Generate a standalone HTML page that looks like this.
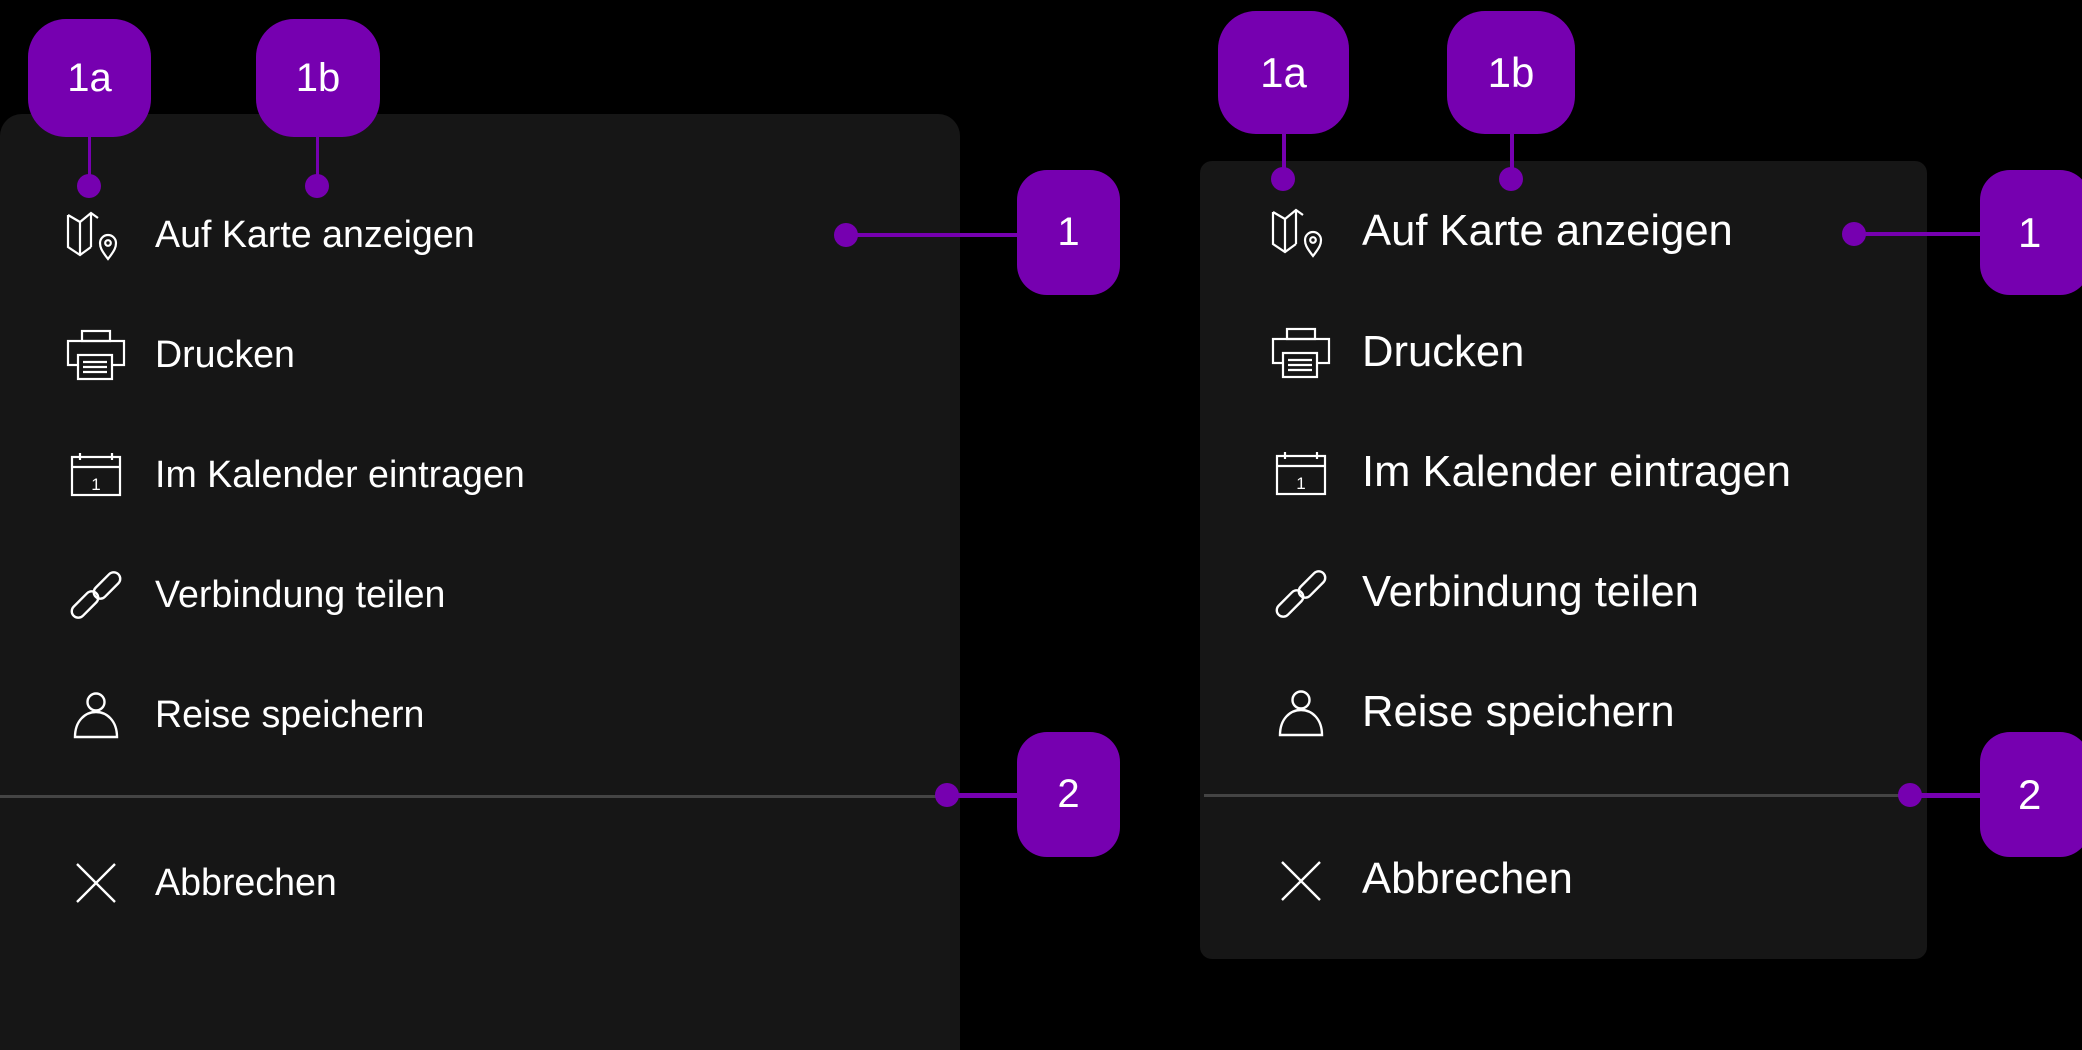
<!DOCTYPE html>
<html><head><meta charset="utf-8"><style>
*{margin:0;padding:0;box-sizing:border-box}
html,body{width:2082px;height:1050px;overflow:hidden}
body{background:#000;position:relative;font-family:"Liberation Sans",sans-serif;color:#fff}
.panel{position:absolute;background:#161616}
.badge{position:absolute;background:#7600b0;color:#fff;display:flex;align-items:center;justify-content:center;border-radius:38px}
.line{position:absolute;background:#7600b0}
.dot{position:absolute;width:24px;height:24px;border-radius:50%;background:#7600b0}
.item{position:absolute;white-space:nowrap;line-height:1}
.ic{position:absolute}
.div{position:absolute;height:3px;background:#444}
</style></head><body>

<div class="panel" style="left:0;top:114px;width:960px;height:936px;border-radius:22px 22px 0 0"></div>
<div class="div" style="left:0;top:795px;width:960px"></div>

<div class="line" style="left:88px;top:130px;width:3px;height:56px"></div>
<div class="line" style="left:316px;top:130px;width:3px;height:56px"></div>
<div class="dot" style="left:77px;top:174px"></div>
<div class="dot" style="left:305px;top:174px"></div>
<div class="badge" style="left:28px;top:19px;width:123px;height:118px;font-size:40px">1a</div>
<div class="badge" style="left:256px;top:19px;width:124px;height:118px;font-size:40px">1b</div>

<div class="line" style="left:846px;top:233px;width:180px;height:4px"></div>
<div class="dot" style="left:834px;top:223px"></div>
<div class="badge" style="left:1017px;top:170px;width:103px;height:125px;font-size:40px;border-radius:30px">1</div>
<div class="line" style="left:947px;top:793px;width:80px;height:5px"></div>
<div class="dot" style="left:935px;top:783px"></div>
<div class="badge" style="left:1017px;top:732px;width:103px;height:125px;font-size:40px;border-radius:30px">2</div>

<div class="panel" style="left:1200px;top:161px;width:727px;height:798px;border-radius:12px"></div>
<div class="div" style="left:1204px;top:794px;width:723px"></div>

<div class="line" style="left:1282px;top:125px;width:4px;height:54px"></div>
<div class="line" style="left:1510px;top:125px;width:4px;height:54px"></div>
<div class="dot" style="left:1271px;top:167px"></div>
<div class="dot" style="left:1499px;top:167px"></div>
<div class="badge" style="left:1218px;top:11px;width:131px;height:123px;font-size:42px">1a</div>
<div class="badge" style="left:1447px;top:11px;width:128px;height:123px;font-size:42px">1b</div>

<div class="line" style="left:1854px;top:232px;width:130px;height:4px"></div>
<div class="dot" style="left:1842px;top:222px"></div>
<div class="badge" style="left:1980px;top:170px;width:110px;height:125px;font-size:42px;border-radius:30px;justify-content:flex-start;padding-left:38px">1</div>
<div class="line" style="left:1910px;top:793px;width:74px;height:5px"></div>
<div class="dot" style="left:1898px;top:783px"></div>
<div class="badge" style="left:1980px;top:732px;width:110px;height:125px;font-size:42px;border-radius:30px;justify-content:flex-start;padding-left:38px">2</div>

<div class="item" style="left:155px;top:216px;font-size:37.6px">Auf Karte anzeigen</div>
<div class="item" style="left:155px;top:336px;font-size:37.6px">Drucken</div>
<div class="item" style="left:155px;top:456px;font-size:37.6px">Im Kalender eintragen</div>
<div class="item" style="left:155px;top:576px;font-size:37.6px">Verbindung teilen</div>
<div class="item" style="left:155px;top:696px;font-size:37.6px">Reise speichern</div>
<div class="item" style="left:155px;top:864px;font-size:37.6px">Abbrechen</div>

<div class="item" style="left:1362px;top:210px;font-size:43.6px">Auf Karte anzeigen</div>
<div class="item" style="left:1362px;top:331px;font-size:43.6px">Drucken</div>
<div class="item" style="left:1362px;top:451px;font-size:43.6px">Im Kalender eintragen</div>
<div class="item" style="left:1362px;top:571px;font-size:43.6px">Verbindung teilen</div>
<div class="item" style="left:1362px;top:691px;font-size:43.6px">Reise speichern</div>
<div class="item" style="left:1362px;top:858px;font-size:43.6px">Abbrechen</div>

<svg width="0" height="0" style="position:absolute">
<defs>
<g id="map" fill="none" stroke="#fff" stroke-width="2.2"><path d="M2 10 L14 17 L25 8 L32 13 M2 10 L2 42 L14 50 L25 42 M14 17 L14 50 M25 8 L25 42"/><path d="M42 54 C35 45 34 42 34 38 A8 8 0 0 1 50 38 C50 42 49 45 42 54 Z"/><circle cx="42" cy="38" r="2.8"/></g>
<g id="print" fill="none" stroke="#fff" stroke-width="2.2"><rect x="16" y="6" width="28" height="10"/><rect x="2" y="16" width="56" height="24"/><rect x="12" y="30" width="34" height="24" fill="#161616"/><path d="M17 37 H41 M17 42 H41 M17 47 H41"/></g>
<g id="cal" fill="none" stroke="#fff" stroke-width="2.2"><rect x="6" y="12" width="48" height="38"/><path d="M6 22 H54 M14 8 V15 M46 8 V15"/><text x="30" y="45" font-size="17" fill="#fff" stroke="none" text-anchor="middle" font-family="Liberation Sans">1</text></g>
<g id="link" fill="none" stroke="#fff" stroke-width="2.4"><rect x="3" y="33" width="32" height="13" rx="6.5" transform="rotate(-45 19 39.5)"/><rect x="25" y="14" width="32" height="13" rx="6.5" transform="rotate(-45 41 20.5)"/></g>
<g id="user" fill="none" stroke="#fff" stroke-width="2.4"><circle cx="30" cy="17" r="8.5"/><path d="M9 52 C9 36 19 27 30 27 C41 27 51 36 51 52 Z"/></g>
<g id="x" fill="none" stroke="#fff" stroke-width="2.4"><path d="M11 11 L49 49 M49 11 L11 49"/></g>
</defs></svg>

<svg class="ic" style="left:66px;top:205px" width="60" height="60" viewBox="0 0 60 60"><use href="#map"/></svg>
<svg class="ic" style="left:66px;top:325px" width="60" height="60" viewBox="0 0 60 60"><use href="#print"/></svg>
<svg class="ic" style="left:66px;top:445px" width="60" height="60" viewBox="0 0 60 60"><use href="#cal"/></svg>
<svg class="ic" style="left:66px;top:565px" width="60" height="60" viewBox="0 0 60 60"><use href="#link"/></svg>
<svg class="ic" style="left:66px;top:685px" width="60" height="60" viewBox="0 0 60 60"><use href="#user"/></svg>
<svg class="ic" style="left:66px;top:853px" width="60" height="60" viewBox="0 0 60 60"><use href="#x"/></svg>

<svg class="ic" style="left:1271px;top:202px" width="60" height="60" viewBox="0 0 60 60"><use href="#map"/></svg>
<svg class="ic" style="left:1271px;top:323px" width="60" height="60" viewBox="0 0 60 60"><use href="#print"/></svg>
<svg class="ic" style="left:1271px;top:444px" width="60" height="60" viewBox="0 0 60 60"><use href="#cal"/></svg>
<svg class="ic" style="left:1271px;top:564px" width="60" height="60" viewBox="0 0 60 60"><use href="#link"/></svg>
<svg class="ic" style="left:1271px;top:683px" width="60" height="60" viewBox="0 0 60 60"><use href="#user"/></svg>
<svg class="ic" style="left:1271px;top:851px" width="60" height="60" viewBox="0 0 60 60"><use href="#x"/></svg>

</body></html>
